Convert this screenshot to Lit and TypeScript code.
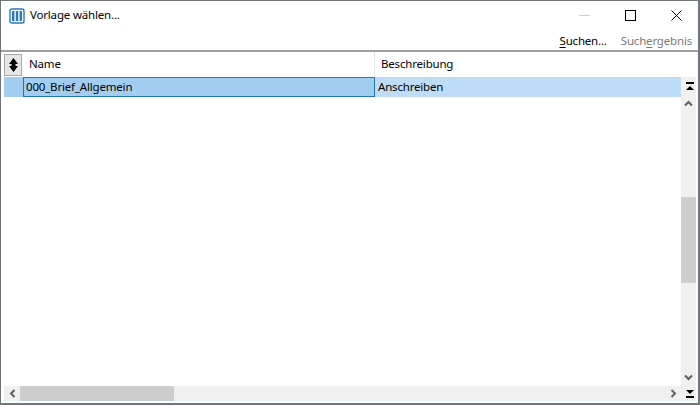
import { LitElement, html, css, svg } from "lit";
import { customElement } from "lit/decorators.js";

const stopArrow = (flip: boolean) => html`<svg class="stop" width="8" height="8" viewBox="0 0 8 8">
  ${flip
    ? svg`<path d="M0 0h8L4 4z" fill="#000"/><rect x="0" y="6" width="8" height="2" fill="#000"/>`
    : svg`<rect x="0" y="0" width="8" height="2" fill="#000"/><path d="M0 8h8L4 4z" fill="#000"/>`}
</svg>`;

@customElement("app-root")
export class AppRoot extends LitElement {
  static styles = css`
    :host {
      display: flex;
      flex-direction: column;
      width: 700px;
      height: 405px;
      box-sizing: border-box;
      border: 1px solid #70757a;
      border-width: 1px 2px 2px 1px;
      background: #fff;
      font-family: "Noto Sans", "Open Sans", sans-serif;
      font-size: 11.5px;
      letter-spacing: -0.18px;
      color: #000;
      overflow: hidden;
    }
    .title {
      height: 29px;
      display: flex;
      align-items: center;
      padding-left: 8px;
      margin-right: -1px;
      flex: none;
    }
    .title .name { margin-left: 5px; padding-bottom: 2px; }
    .spacer { flex: 1; }
    .wb { width: 46px; height: 29px; display: flex; align-items: center; justify-content: center; }
    .wb svg { display: block; }
    .tools {
      height: 20px;
      flex: none;
      display: flex;
      justify-content: flex-end;
      align-items: center;
      gap: 14px;
      padding-right: 6px;
    }
    .tools .off { color: #7a7a7a; }
    u { text-underline-offset: 2px; }
    .sep { height: 2px; background: #a0a0a0; flex: none; }
    .body {
      flex: 1;
      min-height: 0;
      display: grid;
      grid-template-columns: 1fr 15px;
      grid-template-rows: 1fr 15px;
      padding: 0 2px 2px 3px;
    }
    .table { min-width: 0; overflow: hidden; }
    .head {
      height: 24px;
      display: grid;
      grid-template-columns: 19px 352px 1fr;
    }
    .sort {
      box-sizing: border-box;
      width: 18px;
      height: 22px;
      margin-top: 2px;
      background: #e6e6e6;
      border: 1px solid #a8a8a8;
      display: flex;
      align-items: center;
      justify-content: center;
    }
    .hc {
      display: flex;
      align-items: center;
      padding: 0 0 1px 6px;
      border-right: 1px solid #e4e4e4;
    }
    .hc.last { border-right: 0; }
    .row {
      margin-top: 1px;
      height: 20px;
      display: grid;
      grid-template-columns: 19px 352px 1fr;
      background: #bedcf5;
    }
    .sel { background: #a3cdf0; }
    .cell { display: flex; align-items: center; padding: 0 0 2px 3px; box-sizing: border-box; }
    .cell.edit { background: #a3cdf0; border: 1px solid #1f78b4; padding-left: 2px; padding-bottom: 1px; }
    .vs {
      background: #f0f0f0;
      display: flex;
      flex-direction: column;
      align-items: center;
      padding-top: 5px;
      margin-top: 25px;
    }
    .stop { display: block; flex: none; margin-left: 2px; }
    .btn { display: block; flex: none; }
    .btn.up { margin-top: 10px; }
    .btn.down { margin-bottom: 5px; }
    .thumb-v { background: #cdcdcd; width: 15px; height: 86px; margin-top: 90px; flex: none; }
    .hs { background: #f0f0f0; display: flex; align-items: center; }
    .thumb-h { background: #cdcdcd; width: 154px; height: 15px; flex: none; }
    .corner { background: #f0f0f0; display: flex; align-items: center; justify-content: center; }
    .arrow-box { width: 16px; display: flex; justify-content: center; flex: none; }
  `;

  render() {
    return html`
      <div class="title">
        <svg width="16" height="16" viewBox="0 0 16 16">
          <rect x="1" y="1" width="14" height="14" rx="2" fill="#fff" stroke="#2878bd" stroke-width="1.4"/>
          <rect x="3" y="3" width="2.400" height="10" fill="#2878bd"/>
          <rect x="6.800" y="3" width="2.400" height="10" fill="#2878bd"/>
          <rect x="10.600" y="3" width="2.400" height="10" fill="#2878bd"/>
        </svg>
        <span class="name">Vorlage wählen...</span>
        <span class="spacer"></span>
        <span class="wb"><svg width="11" height="11" viewBox="0 0 11 11"><path d="M0 5.500h11" stroke="#cfcfcf"/></svg></span>
        <span class="wb"><svg width="11" height="11" viewBox="0 0 11 11"><rect x=".5" y=".5" width="10" height="10" fill="none" stroke="#000"/></svg></span>
        <span class="wb"><svg width="11" height="11" viewBox="0 0 11 11"><path d="M.5.5l10 10M10.500.5l-10 10" stroke="#000" fill="none"/></svg></span>
      </div>
      <div class="tools">
        <span><u>S</u>uchen...</span>
        <span class="off">Such<u>e</u>rgebnis</span>
      </div>
      <div class="sep"></div>
      <div class="body">
        <div class="table">
          <div class="head">
            <div class="sort">
              <svg width="9" height="14" viewBox="0 0 9 14"><path d="M4.500 0L9 6H6.500v2H9l-4.500 6L0 8h2.500V6H0z" fill="#000"/></svg>
            </div>
            <div class="hc">Name</div>
            <div class="hc last">Beschreibung</div>
          </div>
          <div class="row">
            <div class="sel"></div>
            <div class="cell edit">000_Brief_Allgemein</div>
            <div class="cell">Anschreiben</div>
          </div>
        </div>
        <div class="vs">
          ${stopArrow(false)}
          <svg class="btn up" width="9" height="7" viewBox="0 0 9 7"><path d="M1 5.500l3.500-3.500 3.500 3.500" stroke="#606060" stroke-width="2" fill="none"/></svg>
          <div class="thumb-v"></div>
          <span class="spacer"></span>
          <svg class="btn down" width="9" height="7" viewBox="0 0 9 7"><path d="M1 1.500l3.500 3.500 3.500-3.500" stroke="#606060" stroke-width="2" fill="none"/></svg>
        </div>
        <div class="hs">
          <span class="arrow-box"><svg width="7" height="9" viewBox="0 0 7 9"><path d="M5.500 1L2 4.500 5.500 8" stroke="#606060" stroke-width="2" fill="none"/></svg></span>
          <div class="thumb-h"></div>
          <span class="spacer"></span>
          <span class="arrow-box"><svg width="7" height="9" viewBox="0 0 7 9"><path d="M1.500 1L5 4.500 1.500 8" stroke="#606060" stroke-width="2" fill="none"/></svg></span>
        </div>
        <div class="corner">${stopArrow(true)}</div>
      </div>
    `;
  }
}
